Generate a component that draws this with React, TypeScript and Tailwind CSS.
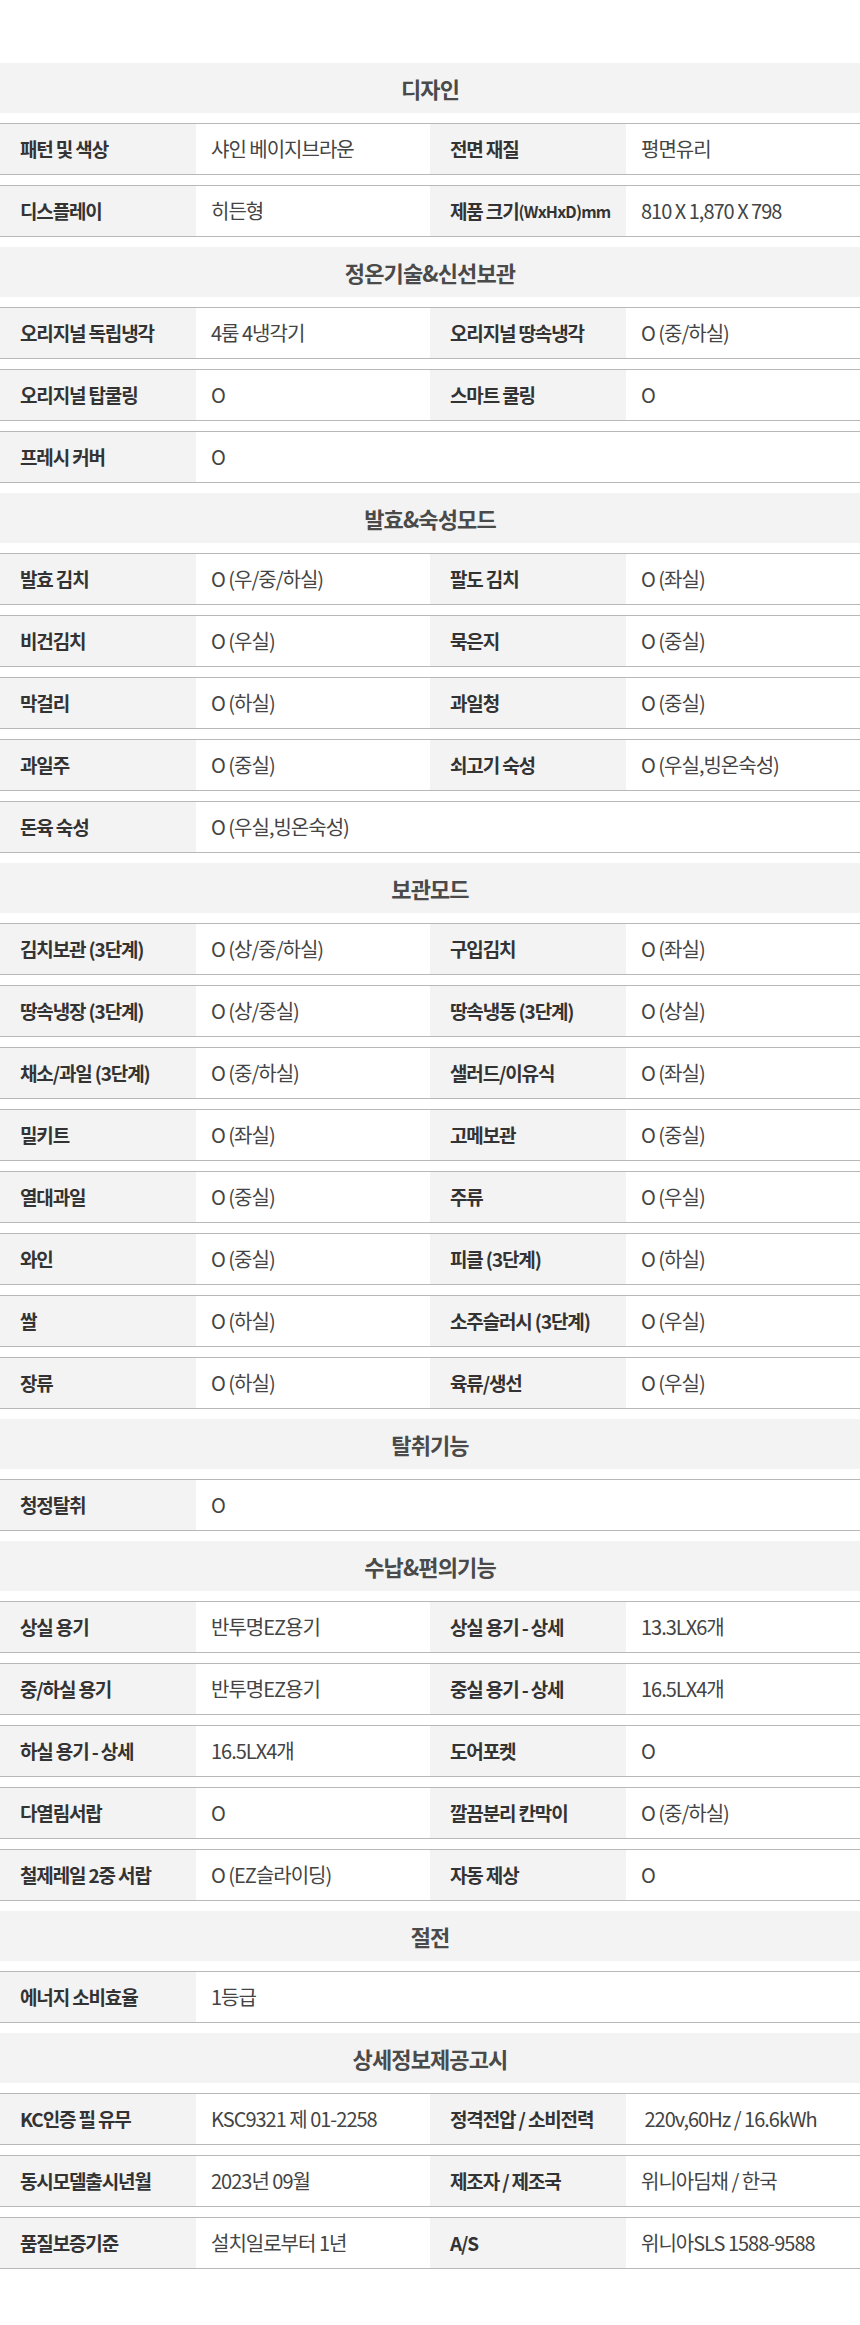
import React from 'react'

type Cell = { label: React.ReactNode; value: string }
type Section = { title: string; rows: Cell[][] }

const sections: Section[] = [
  {
    title: '디자인',
    rows: [
      [
        { label: '패턴 및 색상', value: '샤인 베이지브라운' },
        { label: '전면 재질', value: '평면유리' }
      ],
      [
        { label: '디스플레이', value: '히든형' },
        {
          label: (
            <>
              제품 크기 <span className="text-[16px] tracking-[-0.05em]">(WxHxD)mm</span>
            </>
          ),
          value: '810 X 1,870 X 798'
        }
      ]
    ]
  },
  {
    title: '정온기술&신선보관',
    rows: [
      [
        { label: '오리지널 독립냉각', value: '4룸 4냉각기' },
        { label: '오리지널 땅속냉각', value: 'O (중/하실)' }
      ],
      [
        { label: '오리지널 탑쿨링', value: 'O' },
        { label: '스마트 쿨링', value: 'O' }
      ],
      [{ label: '프레시 커버', value: 'O' }]
    ]
  },
  {
    title: '발효&숙성모드',
    rows: [
      [
        { label: '발효 김치', value: 'O (우/중/하실)' },
        { label: '팔도 김치', value: 'O (좌실)' }
      ],
      [
        { label: '비건김치', value: 'O (우실)' },
        { label: '묵은지', value: 'O (중실)' }
      ],
      [
        { label: '막걸리', value: 'O (하실)' },
        { label: '과일청', value: 'O (중실)' }
      ],
      [
        { label: '과일주', value: 'O (중실)' },
        { label: '쇠고기 숙성', value: 'O (우실,빙온숙성)' }
      ],
      [{ label: '돈육 숙성', value: 'O (우실,빙온숙성)' }]
    ]
  },
  {
    title: '보관모드',
    rows: [
      [
        { label: '김치보관 (3단계)', value: 'O (상/중/하실)' },
        { label: '구입김치', value: 'O (좌실)' }
      ],
      [
        { label: '땅속냉장 (3단계)', value: 'O (상/중실)' },
        { label: '땅속냉동 (3단계)', value: 'O (상실)' }
      ],
      [
        { label: '채소/과일 (3단계)', value: 'O (중/하실)' },
        { label: '샐러드/이유식', value: 'O (좌실)' }
      ],
      [
        { label: '밀키트', value: 'O (좌실)' },
        { label: '고메보관', value: 'O (중실)' }
      ],
      [
        { label: '열대과일', value: 'O (중실)' },
        { label: '주류', value: 'O (우실)' }
      ],
      [
        { label: '와인', value: 'O (중실)' },
        { label: '피클 (3단계)', value: 'O (하실)' }
      ],
      [
        { label: '쌀', value: 'O (하실)' },
        { label: '소주슬러시 (3단계)', value: 'O (우실)' }
      ],
      [
        { label: '장류', value: 'O (하실)' },
        { label: '육류/생선', value: 'O (우실)' }
      ]
    ]
  },
  {
    title: '탈취기능',
    rows: [[{ label: '청정탈취', value: 'O' }]]
  },
  {
    title: '수납&편의기능',
    rows: [
      [
        { label: '상실 용기', value: '반투명EZ용기' },
        { label: '상실 용기 - 상세', value: '13.3LX6개' }
      ],
      [
        { label: '중/하실 용기', value: '반투명EZ용기' },
        { label: '중실 용기 - 상세', value: '16.5LX4개' }
      ],
      [
        { label: '하실 용기 - 상세', value: '16.5LX4개' },
        { label: '도어포켓', value: 'O' }
      ],
      [
        { label: '다열림서랍', value: 'O' },
        { label: '깔끔분리 칸막이', value: 'O (중/하실)' }
      ],
      [
        { label: '철제레일 2중 서랍', value: 'O (EZ슬라이딩)' },
        { label: '자동 제상', value: 'O' }
      ]
    ]
  },
  {
    title: '절전',
    rows: [[{ label: '에너지 소비효율', value: '1등급' }]]
  },
  {
    title: '상세정보제공고시',
    rows: [
      [
        { label: 'KC인증 필 유무', value: 'KSC9321 제 01-2258' },
        { label: '정격전압 / 소비전력', value: '\u00a0220v,60Hz / 16.6kWh' }
      ],
      [
        { label: '동시모델출시년월', value: '2023년 09월' },
        { label: '제조자 / 제조국', value: '위니아딤채 / 한국' }
      ],
      [
        { label: '품질보증기준', value: '설치일로부터 1년' },
        { label: 'A/S', value: '위니아SLS 1588-9588' }
      ]
    ]
  }
]

function SpecRow({ cells }: { cells: Cell[] }) {
  return (
    <div className="grid grid-cols-[196px_234px_196px_1fr] h-[52px] border-y border-[#b8b8b8] mb-[10px]">
      {cells.map((c, i) => (
        <React.Fragment key={i}>
          <div className="flex items-center bg-[#f3f3f3] pl-[20px] font-bold text-[19px] text-[#333] tracking-[-0.06em] whitespace-nowrap">
            {c.label}
          </div>
          <div
            className={`flex items-center pl-[15px] text-[20px] text-[#444] tracking-[-0.05em] whitespace-nowrap ${
              cells.length === 1 ? 'col-span-3' : ''
            }`}
          >
            {c.value}
          </div>
        </React.Fragment>
      ))}
    </div>
  )
}

function SectionBlock({ section }: { section: Section }) {
  return (
    <div>
      <div className="h-[50px] mb-[10px] bg-[#f3f3f3] flex items-center justify-center text-[22px] font-bold text-[#4a4a4a] tracking-[-0.04em]">
        {section.title}
      </div>
      {section.rows.map((r, i) => (
        <SpecRow key={i} cells={r} />
      ))}
    </div>
  )
}

export default function App() {
  return (
    <div
      className="w-[860px] min-h-[2325px] bg-white pt-[63px]"
      style={{ fontFamily: '"Noto Sans CJK KR", "Noto Sans", sans-serif' }}
    >
      {sections.map(s => (
        <SectionBlock key={s.title} section={s} />
      ))}
    </div>
  )
}
